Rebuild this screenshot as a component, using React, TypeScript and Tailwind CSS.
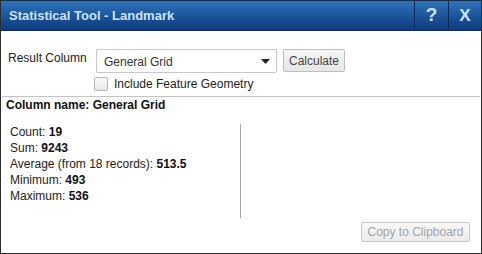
import React from "react";

export default function App() {
  const stats: [string, string][] = [
    ["Count: ", "19"],
    ["Sum: ", "9243"],
    ["Average (from 18 records): ", "513.5"],
    ["Minimum: ", "493"],
    ["Maximum: ", "536"],
  ];
  return (
    <div
      className="w-[482px] h-[254px] bg-[#2b2b2b] p-px flex flex-col text-[12px] text-[#222]"
      style={{ fontFamily: '"Liberation Sans", Arial, sans-serif' }}
    >
      <div className="h-[30px] flex items-stretch bg-gradient-to-b from-[#2f73bb] to-[#0d3a7c] border-b border-[#0a2e63]">
        <div className="flex-1 flex items-center pl-[8px] text-[13px] font-bold text-[#c9e3f7]">
          Statistical Tool - Landmark
        </div>
        <div className="w-[34px] flex items-center justify-center border-l border-[#0a2a55] text-[19px] font-bold text-[#c9e3f7]">
          ?
        </div>
        <div className="w-[33px] flex items-center justify-center border-l border-[#0a2a55] text-[17px] font-bold text-[#c9e3f7]">
          X
        </div>
      </div>
      <div className="flex-1 bg-white flex flex-col">
        <div className="flex pl-[7px] pt-[17px] h-[65px]">
          <div className="w-[88px] text-[12px] text-[#222] pt-[1px]">Result Column</div>
          <div className="flex flex-col">
            <div className="flex items-start gap-[6px]">
              <div className="w-[181px] h-[24px] border border-[#c8c8c8] rounded-[2px] flex items-center pl-[7px] pr-[6px] text-[12px] text-[#333] mt-[1px]">
                <span className="flex-1 pt-[2px]">General Grid</span>
                <svg width="9" height="5" viewBox="0 0 9 5"><path d="M0 0h9L4.5 5z" fill="#222" /></svg>
              </div>
              <div className="w-[62px] h-[23px] border border-[#bdbdbd] rounded-[2px] bg-gradient-to-b from-[#f7f7f7] to-[#e6e6e6] flex items-center justify-center text-[12px] text-[#444] mt-[1px]">
                Calculate
              </div>
            </div>
            <div className="flex items-center mt-[2px] ml-[-2px]">
              <div className="w-[14px] h-[14px] border border-[#b5b5b5] rounded-[2px] bg-gradient-to-b from-[#fafafa] to-[#e8e8e8]" />
              <span className="ml-[6px] text-[12px] text-[#222]">Include Feature Geometry</span>
            </div>
          </div>
        </div>
        <div className="h-px bg-[#c4c4c4] mx-[1px]" />
        <div className="pl-[5px] pt-[1px] leading-[14px] font-bold text-[12px] text-[#111]">Column name: General Grid</div>
        <div className="flex mt-[12px]">
          <div className="w-[240px] pl-[9px] border-r border-[#a8a8a8] h-[94px]">
            {stats.map(([k, v]) => (
              <div key={k} className="leading-[16px] text-[12px] text-[#222]">
                {k}
                <b className="text-[#111]">{v}</b>
              </div>
            ))}
          </div>
        </div>
        <div className="flex justify-end pr-[11px] mt-[4px]">
          <div className="w-[109px] h-[20px] border border-[#c6c6c6] rounded-[2px] bg-gradient-to-b from-[#f8f8f8] to-[#ececec] flex items-center justify-center text-[12px] text-[#a4a4a4]">
            Copy to Clipboard
          </div>
        </div>
      </div>
    </div>
  );
}
